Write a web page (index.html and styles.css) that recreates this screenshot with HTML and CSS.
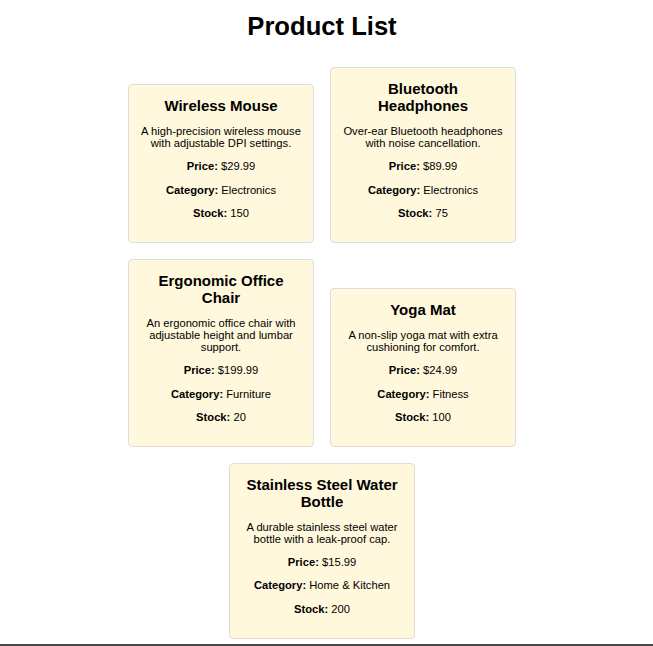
FILE: index.html
```html
<!DOCTYPE html>
<html lang="en">
<head>
<meta charset="utf-8">
<title>Product List</title>
<link rel="stylesheet" href="styles.css">
</head>
<body>
<div class="page">
  <h1 class="title">Product List</h1>
  <div class="list">
    <div class="card">
      <h3 class="card-name">Wireless Mouse</h3>
      <p class="card-desc">A high-precision wireless mouse with adjustable DPI settings.</p>
      <p class="card-field"><strong>Price:</strong> $29.99</p>
      <p class="card-field"><strong>Category:</strong> Electronics</p>
      <p class="card-field"><strong>Stock:</strong> 150</p>
    </div>
    <div class="card">
      <h3 class="card-name">Bluetooth Headphones</h3>
      <p class="card-desc">Over-ear Bluetooth headphones with noise cancellation.</p>
      <p class="card-field"><strong>Price:</strong> $89.99</p>
      <p class="card-field"><strong>Category:</strong> Electronics</p>
      <p class="card-field"><strong>Stock:</strong> 75</p>
    </div>
    <div class="card">
      <h3 class="card-name">Ergonomic Office Chair</h3>
      <p class="card-desc">An ergonomic office chair with adjustable height and lumbar support.</p>
      <p class="card-field"><strong>Price:</strong> $199.99</p>
      <p class="card-field"><strong>Category:</strong> Furniture</p>
      <p class="card-field"><strong>Stock:</strong> 20</p>
    </div>
    <div class="card">
      <h3 class="card-name">Yoga Mat</h3>
      <p class="card-desc">A non-slip yoga mat with extra cushioning for comfort.</p>
      <p class="card-field"><strong>Price:</strong> $24.99</p>
      <p class="card-field"><strong>Category:</strong> Fitness</p>
      <p class="card-field"><strong>Stock:</strong> 100</p>
    </div>
    <div class="card">
      <h3 class="card-name">Stainless Steel Water Bottle</h3>
      <p class="card-desc">A durable stainless steel water bottle with a leak-proof cap.</p>
      <p class="card-field"><strong>Price:</strong> $15.99</p>
      <p class="card-field"><strong>Category:</strong> Home &amp; Kitchen</p>
      <p class="card-field"><strong>Stock:</strong> 200</p>
    </div>
  </div>
</div>
</body>
</html>
```

FILE: styles.css
```css
html {
  overflow: hidden;
}

body {
  margin: 0;
  font-family: "Liberation Sans", Arial, sans-serif;
  color: #000;
  background: #fff;
}

body::after {
  content: "";
  position: fixed;
  left: 0;
  right: 0;
  bottom: 0;
  height: 2px;
  background: #4a4a4a;
}

.page {
  width: 644px;
}

.title {
  margin: 12px 0 26px;
  font-size: 25.6px;
  font-weight: bold;
  text-align: center;
}

.list {
  max-width: 400px;
  margin: 0 auto;
  display: flex;
  flex-wrap: wrap;
  justify-content: center;
  align-items: flex-end;
  gap: 16px 16px;
}

.card {
  box-sizing: border-box;
  width: 186px;
  padding: 12px 11.5px 12px;
  background: #fff8dc;
  border: 1px solid #ddd;
  border-radius: 4px;
  text-align: center;
}

.card-name {
  margin: 0 0 11px;
  font-size: 15px;
  font-weight: bold;
}

.card-desc,
.card-field {
  margin: 11.2px 0;
  font-size: 11.2px;
}

.card-field strong {
  font-weight: bold;
}
```
